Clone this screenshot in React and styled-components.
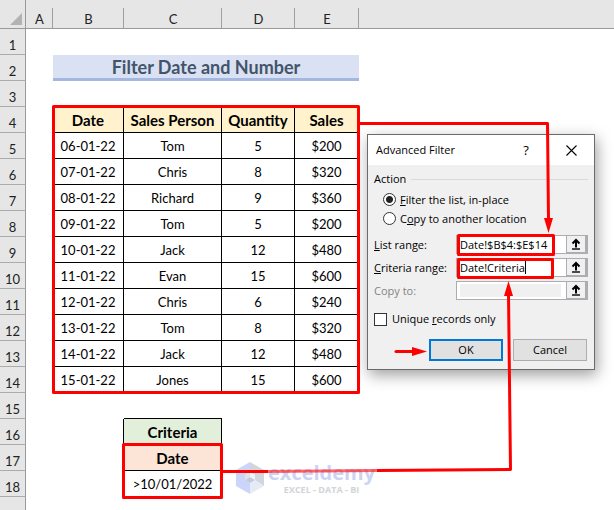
import React from 'react';
import styled, { createGlobalStyle, css } from 'styled-components';

const GlobalStyle = createGlobalStyle`
    * { box-sizing: border-box; }
    body {
        margin: 0;
        background: #fff;
        color: #000;
        font-family: Lato, 'Liberation Sans', sans-serif;
        font-size: 13px;
    }
`;

const Page = styled.main`
    position: relative;
    height: 100vh;
    overflow: hidden;
`;

const Sheet = styled.table`
    width: 100%;
    table-layout: fixed;
    border-collapse: separate;
    border-spacing: 0;
    line-height: 16px;
`;

const Col = styled.col`
    width: ${(p) => p.$w};
`;

const HeadRow = styled.tr`
    height: 29px;
`;

const Row = styled.tr`
    height: 26px;
`;

const ColHead = styled.th`
    padding: 9px 0 0;
    border-bottom: 1px solid #999;
    background: #e6e6e6 ${(p) => p.$tick && 'linear-gradient(#a0a0a0, #a0a0a0) right bottom / 1px 20px no-repeat'};
    color: #222;
    font-weight: 400;
`;

const Corner = styled.td`
    padding: 0 3px 3px 0;
    border-bottom: 1px solid #999;
    border-right: 1px solid #999;
    background: #e6e6e6;
    text-align: right;
    vertical-align: bottom;

    svg { display: block; margin-left: auto; }
`;

const RowHead = styled.th`
    padding: 0 0 1px;
    border-right: 1px solid #999;
    border-bottom: 1px solid #ababab;
    background: #e6e6e6;
    color: #222;
    font-weight: 400;
    vertical-align: bottom;
`;

const fills = {
    head: '#fff2cc',
    criteria: '#e2efda',
    date: '#fce4d6',
};

const Cell = styled.td`
    padding: 0;
    text-align: center;
    white-space: nowrap;
    font-weight: ${(p) => (p.$fill ? 700 : 400)};
    font-size: ${(p) => (p.$fill ? '15px' : '13px')};
    background: ${(p) => fills[p.$fill] || 'none'};
    ${(p) => p.$right && css`border-right: 1px solid #000;`}
    ${(p) => p.$bottom && css`border-bottom: 1px solid #000;`}
`;

const TitleCell = styled.td`
    padding: 0;
    border-bottom: 3px solid #a3b7e0;
    background: #d9e1f2;
    color: #44546a;
    font-size: 18px;
    line-height: 22px;
    font-weight: 700;
    text-align: center;
`;

const Dialog = styled.section`
    position: absolute;
    left: 367px;
    top: 134px;
    width: 228px;
    border: 1px solid #6b6b6b;
    background: #f0f0f0;
    box-shadow: 2px 5px 14px rgba(0, 0, 0, 0.38);
    font-family: 'Open Sans', 'Noto Sans', sans-serif;
    font-size: 11px;
    line-height: 16px;
`;

const TitleBar = styled.header`
    display: flex;
    align-items: center;
    height: 30px;
    padding: 0 14px 0 8px;
    background: #fff;

    h2 {
        flex: 1;
        margin: 0;
        font-size: 11px;
        font-weight: 400;
    }
`;

const TitleButton = styled.button`
    display: flex;
    align-items: center;
    justify-content: center;
    width: 18px;
    height: 18px;
    margin-left: ${(p) => p.$gap || '0'};
    padding: 0;
    border: 0;
    background: none;
    font: inherit;
    font-size: 13px;
`;

const Form = styled.form`
    padding: 6px 6px 8px;
`;

const Group = styled.fieldset`
    margin: 0 0 5px;
    padding: 0;
    border: 0;
`;

const Legend = styled.legend`
    display: flex;
    align-items: center;
    gap: 5px;
    width: 100%;
    padding: 0;

    &::after {
        content: '';
        flex: 1;
        border-top: 1px solid #d9d9d9;
    }
`;

const Option = styled.label`
    display: flex;
    align-items: center;
    gap: 4px;
    height: 19px;
    margin-left: 9px;

    ${Legend} + & { margin-top: 3px; }
`;

const Radio = styled.input`
    appearance: none;
    width: 13px;
    height: 13px;
    margin: 0;
    border: 1px solid #333;
    border-radius: 50%;
    background: #fff;

    &:checked { background: radial-gradient(circle, #222 0 3px, #fff 4px); }
`;

const Checkbox = styled.input`
    appearance: none;
    width: 13px;
    height: 13px;
    margin: 0;
    border: 1px solid #333;
    background: #fff;
`;

const Field = styled.div`
    display: flex;
    align-items: center;
    height: 23px;

    label {
        width: 82px;
        color: ${(p) => (p.$off ? '#838383' : '#000')};
        white-space: nowrap;
    }
`;

const RangeBox = styled.div`
    position: relative;
    display: flex;
    flex: 1;
    min-width: 0;
    height: 19px;
    border: 1px solid #abadb3;
    background: #fff;
`;

const RangeInput = styled.input`
    flex: 1;
    min-width: 0;
    margin: ${(p) => (p.disabled ? '2px 5px 2px 3px' : '0')};
    padding: 0 3px;
    border: 0;
    background: ${(p) => (p.disabled ? '#f0f0f0' : '#fff')};
    color: #000;
    font: inherit;
`;

const Caret = styled.span`
    position: absolute;
    left: 68px;
    top: 2px;
    width: 1px;
    height: 13px;
    background: #000;
`;

const PickButton = styled.button`
    display: flex;
    align-items: center;
    justify-content: center;
    width: 21px;
    padding: 0;
    border: solid #abadb3;
    border-width: 0 2px 1px 1px;
    background: #f0f0f0;
`;

const Unique = styled.label`
    display: flex;
    align-items: center;
    gap: 5px;
    margin-top: 9px;
`;

const Actions = styled.div`
    display: flex;
    justify-content: flex-end;
    gap: 10px;
    margin-top: 12px;
    padding-right: 1px;
`;

const Button = styled.button`
    width: 74px;
    height: 22px;
    padding: 0;
    border: ${(p) => (p.$main ? '2px solid #0078d7' : '1px solid #adadad')};
    background: #e1e1e1;
    color: #000;
    font: inherit;
`;

const Marks = styled.svg`
    position: absolute;
    left: 0;
    top: 0;
    pointer-events: none;
`;

const Brand = styled.div`
    position: absolute;
    left: 236px;
    top: 461px;
    display: flex;
    align-items: center;
    gap: 4px;
    opacity: 0.75;
    font-family: 'Open Sans', sans-serif;
    font-weight: 700;
`;

const BrandName = styled.div`
    color: #bcc6f3;
    font-size: 20px;
    line-height: 24px;
`;

const BrandLine = styled.div`
    color: #c3c6cb;
    font-size: 9px;
    line-height: 10px;
    text-align: center;
`;

const sales = [
    ['06-01-22', 'Tom', 5, '$200'],
    ['07-01-22', 'Chris', 8, '$320'],
    ['08-01-22', 'Richard', 9, '$360'],
    ['09-01-22', 'Tom', 5, '$200'],
    ['10-01-22', 'Jack', 12, '$480'],
    ['11-01-22', 'Evan', 15, '$600'],
    ['12-01-22', 'Chris', 6, '$240'],
    ['13-01-22', 'Tom', 8, '$320'],
    ['14-01-22', 'Jack', 12, '$480'],
    ['15-01-22', 'Jones', 15, '$600'],
];

const EmptyRow = ({ n }) => (
    <Row>
        <RowHead scope="row">{n}</RowHead>
        <Cell colSpan={6} />
    </Row>
);

const DataRow = ({ n, cells, fill }) => (
    <Row>
        <RowHead scope="row">{n}</RowHead>
        <Cell />
        {cells.map((c, i) => (
            <Cell key={i} $right $bottom $fill={fill}>{c}</Cell>
        ))}
        <Cell />
    </Row>
);

const CriteriaRow = ({ n, text, fill }) => (
    <Row>
        <RowHead scope="row">{n}</RowHead>
        <Cell />
        <Cell $right />
        <Cell $right $bottom $fill={fill}>{text}</Cell>
        <Cell colSpan={3} />
    </Row>
);

const UpIcon = () => (
    <svg width="12" height="12" viewBox="0 0 12 12" fill="none" stroke="#000" strokeWidth="2">
        <path d="M6 9.500V2M2.500 5.500L6 2l3.500 3.500" />
        <path d="M2 11h8" strokeWidth="1.4" />
    </svg>
);

const RangeField = ({ id, label, value, off, caret }) => (
    <Field $off={off}>
        <label htmlFor={id}>{label}</label>
        <RangeBox>
            <RangeInput id={id} defaultValue={value} disabled={off} />
            {caret && <Caret />}
            <PickButton type="button" aria-label="Collapse dialog"><UpIcon /></PickButton>
        </RangeBox>
    </Field>
);

const FilterDialog = () => (
    <Dialog role="dialog" aria-labelledby="dialog-title">
        <TitleBar>
            <h2 id="dialog-title">Advanced Filter</h2>
            <TitleButton type="button" aria-label="Help">?</TitleButton>
            <TitleButton type="button" aria-label="Close" $gap="27px">
                <svg width="11" height="11" viewBox="0 0 11 11" stroke="#000" strokeWidth="1.1">
                    <path d="M.5 .5l10 10M10.500 .5l-10 10" />
                </svg>
            </TitleButton>
        </TitleBar>
        <Form>
            <Group>
                <Legend>Action</Legend>
                <Option>
                    <Radio type="radio" name="action" defaultChecked />
                    <span><u>F</u>ilter the list, in-place</span>
                </Option>
                <Option>
                    <Radio type="radio" name="action" />
                    <span>C<u>o</u>py to another location</span>
                </Option>
            </Group>
            <RangeField id="list-range" label={<><u>L</u>ist range:</>} value="Date!$B$4:$E$14" />
            <RangeField id="criteria-range" label={<><u>C</u>riteria range:</>} value="Date!Criteria" caret />
            <RangeField id="copy-to" label="Copy to:" off />
            <Unique>
                <Checkbox type="checkbox" />
                <span>Unique <u>r</u>ecords only</span>
            </Unique>
            <Actions>
                <Button type="button" $main>OK</Button>
                <Button type="button">Cancel</Button>
            </Actions>
        </Form>
    </Dialog>
);

const App = () => {
    return (
        <>
            <GlobalStyle />
            <Page>
                <Sheet>
                    <colgroup>
                        <Col $w="26px" />
                        <Col $w="27px" />
                        <Col $w="71px" />
                        <Col $w="98px" />
                        <Col $w="73px" />
                        <Col $w="64px" />
                        <Col $w="auto" />
                    </colgroup>
                    <thead>
                        <HeadRow>
                            <Corner>
                                <svg width="12" height="12" viewBox="0 0 12 12"><path d="M12 0v12H0z" fill="#b2b2b2" /></svg>
                            </Corner>
                            {['A', 'B', 'C', 'D', 'E'].map((c) => (
                                <ColHead key={c} scope="col" $tick>{c}</ColHead>
                            ))}
                            <ColHead />
                        </HeadRow>
                    </thead>
                    <tbody>
                        <EmptyRow n={1} />
                        <Row>
                            <RowHead scope="row">2</RowHead>
                            <Cell />
                            <TitleCell colSpan={4}>Filter Date and Number</TitleCell>
                            <Cell />
                        </Row>
                        <EmptyRow n={3} />
                        <DataRow n={4} cells={['Date', 'Sales Person', 'Quantity', 'Sales']} fill="head" />
                        {sales.map((row, i) => (
                            <DataRow key={row[0]} n={i + 5} cells={row} />
                        ))}
                        <Row>
                            <RowHead scope="row">15</RowHead>
                            <Cell colSpan={2} />
                            <Cell $bottom />
                            <Cell colSpan={3} />
                        </Row>
                        <CriteriaRow n={16} text="Criteria" fill="criteria" />
                        <CriteriaRow n={17} text="Date" fill="date" />
                        <CriteriaRow n={18} text=">10/01/2022" />
                        <EmptyRow n="" />
                    </tbody>
                </Sheet>

                <FilterDialog />

                <Brand>
                    <svg width="28" height="32" viewBox="0 0 28 32">
                        <path d="M14 0L0 8v16l14 8V21l-5-3v-5l5-3z" fill="#b9c8f8" />
                        <path d="M14 0v10l5 3v5l9 6V8z" fill="#c4c8d0" />
                        <path d="M28 24l-9-6-5 3v11z" fill="#dde3f5" />
                        <path d="M14 10l-5 3v5l5-3z" fill="#d8dce6" />
                        <path d="M14 10l5 3v5l-5-3z" fill="#eef1fa" />
                        <path d="M9 18l5-3 5 3-5 3z" fill="#aeb8d8" />
                    </svg>
                    <div>
                        <BrandName>exceldemy</BrandName>
                        <BrandLine>EXCEL - DATA - BI</BrandLine>
                    </div>
                </Brand>

                <Marks width="614" height="510" viewBox="0 0 614 510" fill="none" stroke="#f00" strokeWidth="3" strokeLinejoin="round">
                    <rect x="53.5" y="106.5" width="305" height="286" />
                    <rect x="123.5" y="444.5" width="98" height="53" />
                    <rect x="458.5" y="235.5" width="95" height="19" />
                    <rect x="458.5" y="259.5" width="94" height="18" />
                    <path d="M360 123.500H547.500L548.500 220" />
                    <path d="M222 471.500H268M377 470.500L510.500 469.500L508.500 294" />
                    <path d="M268 471.500L377 470.500" strokeOpacity="0.6" />
                    <path d="M396 351.500H414" strokeLinecap="round" />
                    <g fill="#f00" stroke="none">
                        <path d="M544 218h9l-4.500 15z" />
                        <path d="M504 296h9l-4.500-15z" />
                        <path d="M412 347v9l15-4.500z" />
                    </g>
                </Marks>
            </Page>
        </>
    );
};

export default App;
